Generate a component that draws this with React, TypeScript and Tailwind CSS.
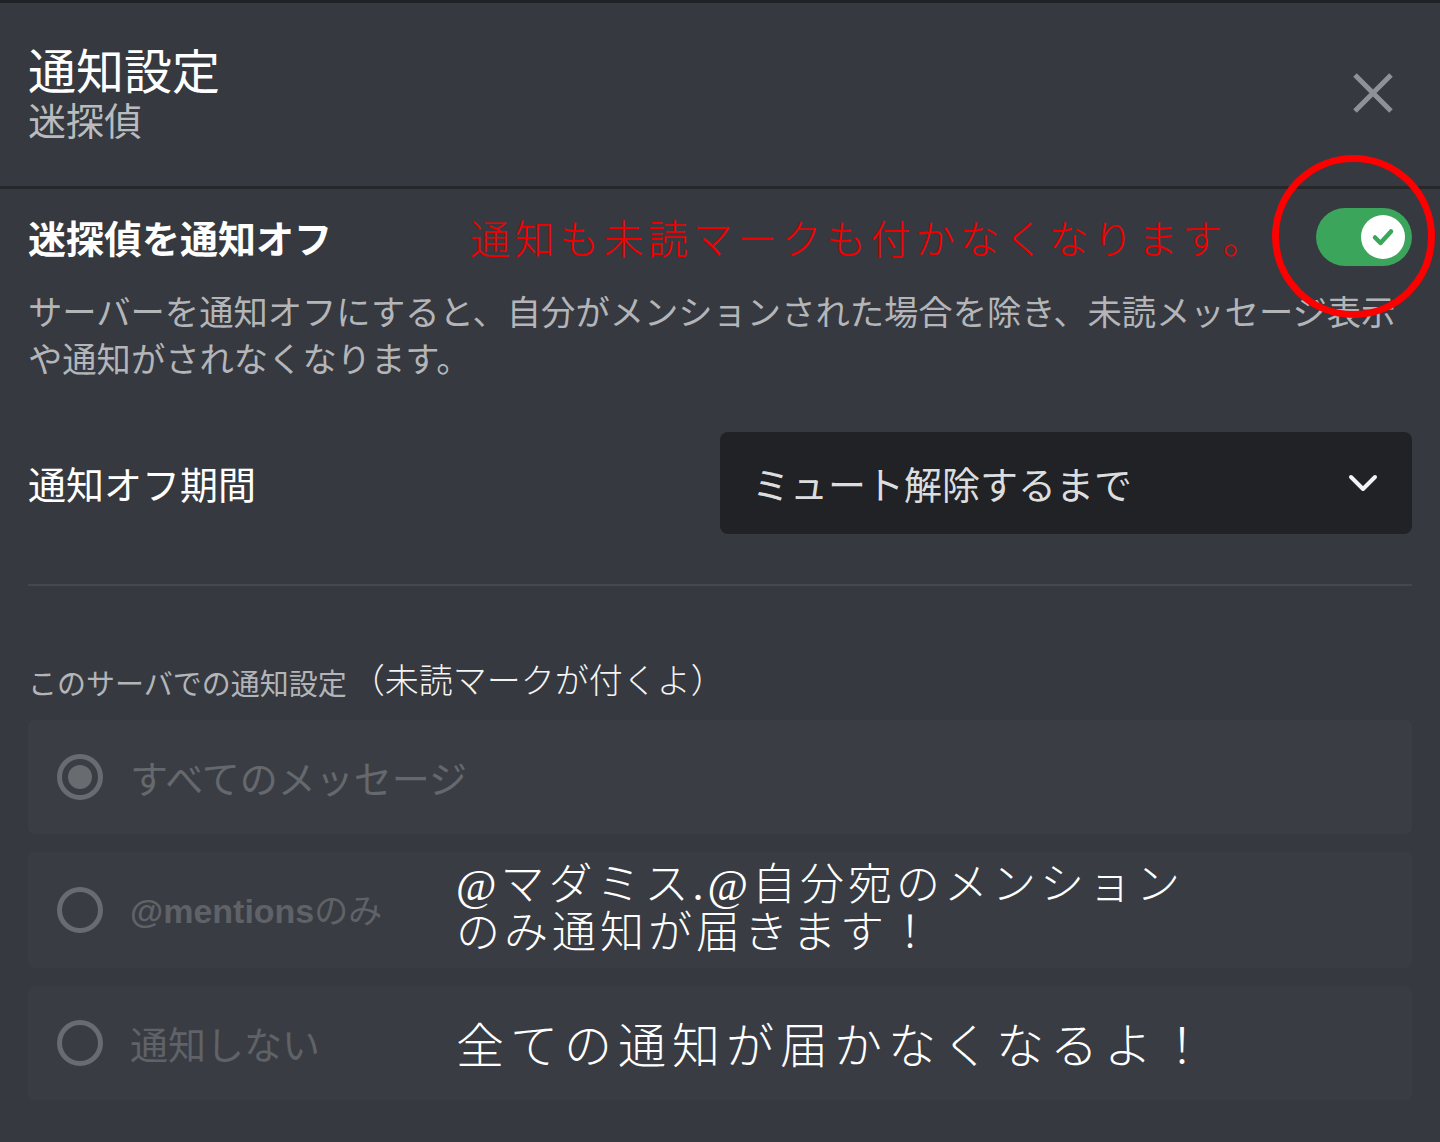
import React from "react";

const jp = { fontFamily: '"Noto Sans CJK JP", "Noto Sans", sans-serif' };
const anno = { fontFamily: '"Liberation Serif", "Noto Sans CJK JP", serif' };

function Radio({ checked }: { checked?: boolean }) {
  return (
    <div className="w-[46px] h-[46px] shrink-0 rounded-full border-[5px] border-[#686b70] flex items-center justify-center">
      {checked && <div className="w-[24px] h-[24px] rounded-full bg-[#686b70]" />}
    </div>
  );
}

export default function App() {
  return (
    <div className="w-[1440px] h-[1142px] bg-[#36393f] overflow-hidden relative" style={jp}>
      <div className="h-[3px] bg-[#202225]" />
      {/* Header */}
      <div className="flex justify-between items-start pl-[28px] pr-[47px] pt-[37px] h-[186px] border-b-[3px] border-[#25272b]">
        <div className="flex flex-col">
          <div className="text-[48px] leading-[56px] text-white">通知設定</div>
          <div className="text-[38px] leading-[46px] text-[#b9bbbe]">迷探偵</div>
        </div>
        <svg width="40" height="40" viewBox="0 0 40 40" className="mt-[33px]">
          <path d="M2 2 L38 38 M38 2 L2 38" stroke="#8e9297" strokeWidth="5" />
        </svg>
      </div>

      <div className="px-[28px]">
        {/* Toggle row */}
        <div className="flex items-center h-[58px] mt-[19px]">
          <div className="w-[442px] shrink-0 text-[38px] leading-[46px] text-white font-bold">迷探偵を通知オフ</div>
          <div className="text-[40px] leading-[48px] tracking-[4.5px] text-[#f00000] font-light mt-[8px]" style={anno}>
            通知も未読マークも付かなくなります。
          </div>
          <div className="ml-auto w-[96px] h-[58px] rounded-full bg-[#3ba55c] flex items-center justify-end pr-[7px]">
            <div className="w-[44px] h-[44px] rounded-full bg-white flex items-center justify-center">
              <svg width="26" height="26" viewBox="0 0 26 26">
                <path d="M5 13.5 L10.5 19 L21 7.5" fill="none" stroke="#3ba55c" strokeWidth="4.5" strokeLinecap="round" strokeLinejoin="round" />
              </svg>
            </div>
          </div>
        </div>

        {/* Description */}
        <div className="mt-[21px] text-[34.3px] leading-[47px] text-[#b3b5b8]">
          サーバーを通知オフにすると、自分がメンションされた場合を除き、未読メッセージ表示や通知がされなくなります。
        </div>

        {/* Mute duration */}
        <div className="flex items-center justify-between mt-[51px] h-[102px]">
          <div className="text-[38px] leading-[46px] text-white">通知オフ期間</div>
          <div className="w-[692px] h-[102px] rounded-[8px] bg-[#202225] flex items-center justify-between pl-[32px] pr-[34px]">
            <div className="text-[38px] leading-[46px] text-[#dcddde]">ミュート解除するまで</div>
            <svg width="30" height="20" viewBox="0 0 30 20">
              <path d="M3 4 L15 16 L27 4" fill="none" stroke="#f2f3f5" strokeWidth="4" strokeLinecap="round" strokeLinejoin="round" />
            </svg>
          </div>
        </div>

        <div className="h-[2px] bg-[#45484e] mt-[50px]" />

        {/* Section label */}
        <div className="mt-[76px] h-[40px] flex items-center">
          <span className="text-[29px] leading-[40px] text-[#b3b5b8]">このサーバでの通知設定</span>
          <span className="text-[34px] leading-[40px] text-[#f4f4f4] font-light ml-[4px]" style={anno}>（未読マークが付くよ）</span>
        </div>

        {/* Radio rows */}
        <div className="flex flex-col gap-[18px] mt-[18px]">
          <div className="h-[114px] rounded-[6px] bg-[#3a3d44] flex items-center pl-[29px]">
            <Radio checked />
            <div className="ml-[27px] text-[38px] leading-[46px] text-[#65686d]">すべてのメッセージ</div>
          </div>
          <div className="h-[116px] rounded-[6px] bg-[#393c42] flex items-center pl-[29px]">
            <Radio />
            <div className="ml-[27px] w-[326px] shrink-0 text-[34px] leading-[46px] text-[#5f6267]">
              <span className="font-bold" style={{ fontFamily: '"Liberation Sans", "Noto Sans", sans-serif' }}>@mentions</span>のみ
            </div>
            <div className="text-[44px] leading-[48px] tracking-[4px] text-white font-light" style={anno}>
              @マダミス.@自分宛のメンション<br />のみ通知が届きます！
            </div>
          </div>
          <div className="h-[114px] rounded-[6px] bg-[#393c42] flex items-center pl-[29px]">
            <Radio />
            <div className="ml-[27px] w-[326px] shrink-0 text-[38px] leading-[46px] text-[#5f6267]">通知しない</div>
            <div className="text-[48px] leading-[56px] tracking-[6px] text-white font-light mt-[8px]" style={anno}>
              全ての通知が届かなくなるよ！
            </div>
          </div>
        </div>
      </div>

      {/* Red circle annotation */}
      <div className="absolute left-[1272px] top-[155px] w-[163px] h-[163px] rounded-full border-[7px] border-[#ff0000] pointer-events-none" />
    </div>
  );
}
